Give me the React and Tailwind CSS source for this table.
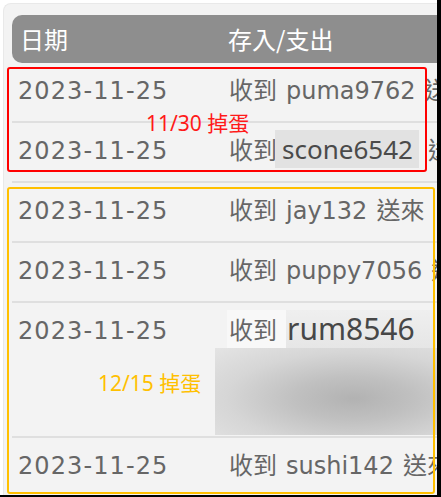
import React from "react";

const latin = "font-['DejaVu_Sans','Noto_Sans_CJK_TC',sans-serif]";

const rows = [
  { name: "puma9762", tail: "送來的禮物" },
  { name: "scone6542", tail: "送來的禮物", mark: "box" },
  { name: "jay132", tail: "送來" },
  { name: "puppy7056", tail: "送來的禮物" },
  { name: "rum8546", tail: "", mark: "blur" },
  { name: "sushi142", tail: "送來的禮物" },
];

function Row({ r }) {
  if (r.mark === "blur") {
    return (
      <div className="h-[135px] border-b-2 border-[#dfdfdf] pt-[7px] box-border">
        <div className="flex items-start h-[38px]">
          <div className={`w-[217px] shrink-0 pl-[6px] mt-[3px] text-[24px] leading-[36px] text-[#666] tracking-[1.1px] ${latin}`}>
            2023-11-25
          </div>
          <div className={`-ml-[2px] pl-[2px] pr-[9px] pt-[3px] h-[38px] bg-[#f8f8f8] text-[24px] leading-[36px] text-[#666] ${latin}`}>
            收到
          </div>
          <div className="w-[150px] shrink-0 h-[38px] pl-[1px] bg-gradient-to-b from-[#efefef] to-[#e6e6e6] text-[30px] leading-[37px] text-[#474747] font-['Noto_Sans',sans-serif]">
            rum8546
          </div>
        </div>
        <div className="ml-[203px] w-[224px] h-[87px] bg-[radial-gradient(ellipse_at_62%_58%,#b2b2b2_0%,#c0c0c0_30%,#d6d6d6_65%,#e4e4e4_100%)]" />
      </div>
    );
  }

  return (
    <div className="h-[60px] border-b-2 border-[#dfdfdf] pt-[10px] box-border flex items-start whitespace-nowrap">
      <div className={`w-[217px] shrink-0 pl-[6px] text-[24px] leading-[36px] text-[#666] tracking-[1.1px] ${latin}`}>
        2023-11-25
      </div>
      <div className={`flex items-start text-[24px] leading-[36px] text-[#666] ${latin}`}>
        <span>收到</span>
        {r.mark === "box" ? (
          <span className="-ml-[2px] -mt-[3px] h-[38px] w-[144px] shrink-0 pl-[7px] bg-[#e2e2e2] text-[26px] leading-[38px] text-[#4a4a4a] font-['Noto_Sans',sans-serif]">
            {r.name}
          </span>
        ) : (
          <span className="ml-[9px]">{r.name}</span>
        )}
        <span className="ml-[9px]">{r.tail}</span>
      </div>
    </div>
  );
}

export default function App() {
  return (
    <div className="w-[441px] h-[497px] bg-black overflow-hidden">
      <div className="relative w-[437px] h-[495px] bg-white overflow-hidden pt-[3px] pl-[3px]">
        <div className="h-full bg-[#f3f3f3] rounded-tl-[8px] border-l border-t border-[#e9e9e9] pt-[11px] pl-[8px]">
          {/* HEADER */}
          <div className="h-[48px] w-[500px] rounded-l-[10px] bg-[#8e8e8e] flex items-center text-white text-[24px] font-['Noto_Sans_CJK_TC',sans-serif]">
            <div className="w-[216px] pl-[8px]">日期</div>
            <div>存入/支出</div>
          </div>

          {/* ROWS */}
          <div className="w-[500px]">
            {rows.map((r, i) => (
              <Row key={i} r={r} />
            ))}
          </div>
        </div>

        {/* ANNOTATIONS */}
        <div className="absolute left-[7px] top-[67px] w-[420px] h-[105px] border-2 border-[#ff0000] rounded-[3px]" />
        <div className="absolute left-[146px] top-[111px] text-[21px] leading-[24px] text-[#ff1a1a] font-['Noto_Sans','Noto_Sans_CJK_TC',sans-serif] whitespace-nowrap">
          11/30 掉蛋
        </div>
        <div className="absolute left-[7px] top-[187px] w-[428px] h-[307px] border-2 border-[#ffc000] rounded-[3px]" />
        <div className="absolute left-[98px] top-[371px] text-[21px] leading-[24px] text-[#ffc000] font-['Noto_Sans','Noto_Sans_CJK_TC',sans-serif] whitespace-nowrap">
          12/15 掉蛋
        </div>
      </div>
    </div>
  );
}
